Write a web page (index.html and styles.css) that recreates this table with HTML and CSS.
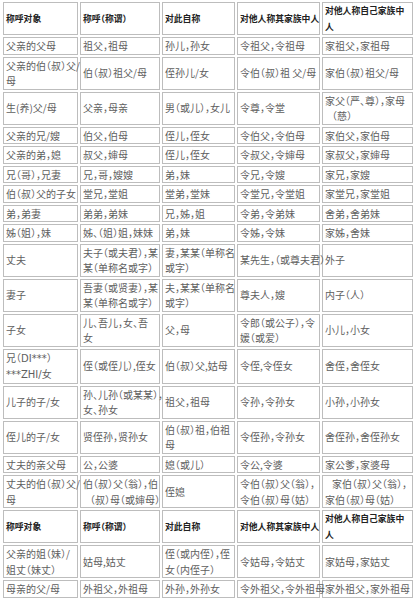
FILE: index.html
```html
<!DOCTYPE html>
<html lang="zh-CN">
<head>
<meta charset="utf-8">
<title>称呼表</title>
<link rel="stylesheet" href="styles.css">
</head>
<body>
<table class="kin">
<colgroup>
<col class="c1"><col class="c2"><col class="c3"><col class="c4"><col class="c5">
</colgroup>
<tbody>
<tr class="two head"><td>称呼对象</td><td>称呼（称谓）</td><td>对此自称</td><td>对他人称其家族中人</td><td>对他人称自己家族中<br>人</td></tr>
<tr><td>父亲的父母</td><td>祖父，祖母</td><td>孙儿，孙女</td><td>令祖父，令祖母</td><td>家祖父，家祖母</td></tr>
<tr class="two"><td>父亲的伯（叔）父/<br>母</td><td>伯（叔）祖父/母</td><td>侄孙儿/女</td><td>令伯（叔）祖 父/母</td><td>家伯（叔）祖父/母</td></tr>
<tr class="two"><td>生(养)父/母</td><td>父亲，母亲</td><td>男（或儿），女儿</td><td>令尊，令堂</td><td>家父（严、尊），家母<br><span class="ind">（慈）</span></td></tr>
<tr><td>父亲的兄/嫂</td><td>伯父，伯母</td><td>侄儿，侄女</td><td>令伯父，令伯母</td><td>家伯父，家伯母</td></tr>
<tr><td>父亲的弟，媳</td><td>叔父，婶母</td><td>侄儿，侄女</td><td>令叔父，令婶母</td><td>家叔父，家婶母</td></tr>
<tr><td>兄（哥），兄妻</td><td>兄，哥，嫂嫂</td><td>弟，妹</td><td>令兄，令嫂</td><td>家兄，家嫂</td></tr>
<tr><td>伯（叔）父的子女</td><td>堂兄，堂姐</td><td>堂弟，堂妹</td><td>令堂兄，令堂姐</td><td>家堂兄，家堂姐</td></tr>
<tr><td>弟，弟妻</td><td>弟弟，弟妹</td><td>兄，姊，姐</td><td>令弟，令弟妹</td><td>舍弟，舍弟妹</td></tr>
<tr><td>姊（姐），妹</td><td>姊、（姐）姐，妹妹</td><td>弟，妹</td><td>令姊，令妹</td><td>家姊，舍妹</td></tr>
<tr class="two"><td>丈夫</td><td>夫子（或夫君），某<br>某（单称名或字）</td><td>妻，某某（单称名<br>或字）</td><td>某先生，（或尊夫君）</td><td>外子</td></tr>
<tr class="two"><td>妻子</td><td>吾妻（或贤妻），某<br>某（单称名或字）</td><td>夫，某某（单称名<br>或字）</td><td>尊夫人，嫂</td><td>内子（人）</td></tr>
<tr class="two"><td>子女</td><td>儿、吾儿，女、吾<br>女</td><td>父，母</td><td>令郎（或公子），令<br>媛（或爱）</td><td>小儿，小女</td></tr>
<tr class="two"><td><span class="lat">兄（DI***）</span><br><span class="lat">***ZHI/女</span></td><td>侄（或侄儿）,侄女</td><td>伯（叔）父,姑母</td><td>令侄,令侄女</td><td>舍侄，舍侄女</td></tr>
<tr class="two"><td>儿子的子/女</td><td>孙、儿孙（或某某），<br>女、孙女</td><td>祖父，祖母</td><td>令孙，令孙女</td><td>小孙，小孙女</td></tr>
<tr class="two"><td>侄儿的子/女</td><td>贤侄孙，贤孙女</td><td>伯（叔）祖，伯祖<br>母</td><td>令侄孙，令孙女</td><td>舍侄孙，舍侄孙女</td></tr>
<tr><td>丈夫的亲父母</td><td>公，公婆</td><td>媳（或儿）</td><td>令公,令婆</td><td>家公爹，家婆母</td></tr>
<tr class="two"><td>丈夫的伯（叔）父/<br>母</td><td>伯（叔）父（翁），伯<br><span class="ind">（叔）母（或婶母）</span></td><td>侄媳</td><td>令伯（叔）父（翁），<br>令伯（叔）母（姑）</td><td><span class="ind">家伯（叔）父（翁），</span><br>家伯（叔）母（姑）</td></tr>
<tr class="two head"><td>称呼对象</td><td>称呼（称谓）</td><td>对此自称</td><td>对他人称其家族中人</td><td>对他人称自己家族中<br>人</td></tr>
<tr class="two"><td>父亲的姐（妹）/<br>姐丈（妹丈）</td><td>姑母,姑丈</td><td>侄（或内侄），侄<br>女（内侄子）</td><td>令姑母，令姑丈</td><td>家姑母，家姑丈</td></tr>
<tr><td>母亲的父/母</td><td>外祖父，外祖母</td><td>外孙，外孙女</td><td>令外祖父，令外祖母</td><td>家外祖父，家外祖母</td></tr>
</tbody>
</table>
</body>
</html>
```
FILE: styles.css
```css
html, body {
  margin: 0;
  padding: 0;
  background: #ffffff;
}

.kin {
  margin: 0 0 0 1px;
  width: 414px;
  table-layout: fixed;
  border-collapse: separate;
  border-spacing: 2px;
  font-family: "Noto Sans CJK SC", "Noto Sans", sans-serif;
  font-size: 10px;
  font-feature-settings: "halt";
  color: #5e5e5e;
}

.c1 { width: 75px; }
.c2 { width: 80px; }
.c3 { width: 73px; }
.c4 { width: 83px; }
.c5 { width: 91px; }

.kin td {
  border: 1px solid #bdbdbd;
  padding: 0 1px 0 2px;
  line-height: 15.5px;
  height: 15.5px;
  vertical-align: middle;
  white-space: nowrap;
  overflow: visible;
}

.kin tr.two td {
  height: 31px;
}

.kin tr.head td {
  font-weight: bold;
  color: #222222;
  font-size: 8.8px;
}

.ind {
  padding-left: 7px;
}

.lat {
  font-family: "DejaVu Sans", "Noto Sans CJK SC", sans-serif;
  font-size: 10px;
}
```
